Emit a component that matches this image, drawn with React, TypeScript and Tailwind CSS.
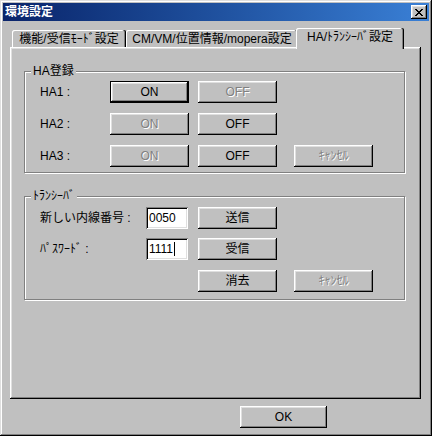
import React from 'react';

const FONT = "font-['Liberation_Sans','Noto_Sans_CJK_JP',sans-serif]";
const RAISED =
  'shadow-[inset_-1px_-1px_0_#000,inset_1px_1px_0_#fff,inset_-2px_-2px_0_#808080,inset_2px_2px_0_#dfdfdf]';
const SUNKEN =
  'shadow-[inset_1px_1px_0_#808080,inset_-1px_-1px_0_#fff,inset_2px_2px_0_#000,inset_-2px_-2px_0_#dfdfdf]';

type BtnProps = {
  children: React.ReactNode;
  disabled?: boolean;
  isDefault?: boolean;
  className?: string;
};

function Btn({ children, disabled, isDefault, className = '' }: BtnProps) {
  return (
    <button
      type="button"
      className={`flex items-center justify-center shrink-0 h-[22px] w-[79px] bg-[#c0c0c0] text-[12px] leading-none ${RAISED} ${
        isDefault ? 'border border-black' : ''
      } ${disabled ? 'text-[#808080] [text-shadow:1px_1px_0_#fff]' : 'text-black'} ${className}`}
    >
      {children}
    </button>
  );
}

function CloseBtn() {
  // classic 8x7 pixel cross
  const px: [number, number][] = [
    [0, 0], [1, 0], [6, 0], [7, 0],
    [1, 1], [2, 1], [5, 1], [6, 1],
    [2, 2], [3, 2], [4, 2], [5, 2],
    [3, 3], [4, 3],
    [2, 4], [3, 4], [4, 4], [5, 4],
    [1, 5], [2, 5], [5, 5], [6, 5],
    [0, 6], [1, 6], [6, 6], [7, 6],
  ];
  return (
    <div className={`w-[16px] h-[14px] bg-[#c0c0c0] flex items-center justify-center ${RAISED}`}>
      <svg width="8" height="7" viewBox="0 0 8 7" shapeRendering="crispEdges">
        {px.map(([x, y]) => (
          <rect key={`${x}-${y}`} x={x} y={y} width="1" height="1" fill="#000" />
        ))}
      </svg>
    </div>
  );
}

function Group({ label, className = '', children }: { label: string; className?: string; children: React.ReactNode }) {
  return (
    <div
      className={`relative w-[381px] border border-[#808080] shadow-[inset_1px_1px_0_#fff,1px_1px_0_#fff] pl-[15px] flex flex-col ${className}`}
    >
      <span className="absolute left-[6px] top-[-8px] px-[2px] bg-[#c0c0c0] text-[12px] leading-[14px] text-black">
        {label}
      </span>
      {children}
    </div>
  );
}

export default function App() {
  return (
    <div
      className={`w-[432px] h-[436px] bg-[#c0c0c0] p-[3px] flex flex-col shadow-[inset_-1px_-1px_0_#000,inset_1px_1px_0_#dfdfdf,inset_-2px_-2px_0_#808080,inset_2px_2px_0_#fff] ${FONT}`}
    >
      {/* Title bar */}
      <div className="h-[18px] flex items-center justify-between pl-[2px] pr-[2px] bg-linear-to-r from-[#0a246a] to-[#3a80d6]">
        <span className="text-white font-bold text-[12px] leading-none">環境設定</span>
        <CloseBtn />
      </div>

      <div className="pl-[7px] pt-[7px] flex flex-col">
        {/* Tabs */}
        <div className="flex items-end h-[19px] pl-[2px] text-[12px] leading-none text-black">
          <div className="w-[114px] h-[17px] flex items-center justify-center rounded-t-[2px] shadow-[inset_-1px_0_0_#000,inset_-2px_0_0_#808080,inset_1px_1px_0_#fff]">
            機能/受信ﾓｰﾄﾞ設定
          </div>
          <div className="w-[172px] h-[17px] flex items-center justify-center rounded-t-[2px] shadow-[inset_-1px_0_0_#000,inset_-2px_0_0_#808080,inset_1px_1px_0_#fff]">
            CM/VM/位置情報/mopera設定
          </div>
          <div className="relative z-10 ml-[-2px] mb-[-2px] w-[108px] h-[21px] pb-[4px] flex items-center justify-center bg-[#c0c0c0] rounded-t-[2px] shadow-[inset_-1px_0_0_#000,inset_-2px_0_0_#808080,inset_1px_1px_0_#fff]">
            HA/ﾄﾗﾝｼｰﾊﾞ設定
          </div>
        </div>

        {/* Tab panel */}
        <div className={`w-[411px] h-[352px] bg-[#c0c0c0] pl-[14px] pt-[24px] flex flex-col ${RAISED}`}>
          <Group label="HA登録" className="h-[102px] pt-[9px] gap-[10px]">
            <div className="flex items-center h-[22px]">
              <span className="w-[70px] text-[12px] leading-none">HA1 :</span>
              <Btn isDefault>ON</Btn>
              <Btn disabled className="ml-[9px]">OFF</Btn>
            </div>
            <div className="flex items-center h-[22px]">
              <span className="w-[70px] text-[12px] leading-none">HA2 :</span>
              <Btn disabled>ON</Btn>
              <Btn className="ml-[9px]">OFF</Btn>
            </div>
            <div className="flex items-center h-[22px]">
              <span className="w-[70px] text-[12px] leading-none">HA3 :</span>
              <Btn disabled>ON</Btn>
              <Btn className="ml-[9px]">OFF</Btn>
              <Btn disabled className="ml-[17px]">ｷｬﾝｾﾙ</Btn>
            </div>
          </Group>

          <Group label="ﾄﾗﾝｼｰﾊﾞ" className="mt-[23px] h-[104px] pt-[10px]">
            <div className="flex items-center h-[22px]">
              <span className="w-[106px] text-[12px] leading-none">新しい内線番号 :</span>
              <div className={`w-[42px] h-[22px] bg-white pl-[3px] flex items-center text-[12px] leading-none ${SUNKEN}`}>
                0050
              </div>
              <Btn className="ml-[10px]">送信</Btn>
            </div>
            <div className="flex items-center h-[22px] mt-[9px]">
              <span className="w-[106px] text-[12px] leading-none">ﾊﾟｽﾜｰﾄﾞ :</span>
              <div className={`w-[42px] h-[22px] bg-white pl-[3px] flex items-center text-[12px] leading-none ${SUNKEN}`}>
                1111
                <span className="inline-block w-px h-[14px] bg-black ml-[1px]" />
              </div>
              <Btn className="ml-[10px]">受信</Btn>
            </div>
            <div className="flex items-center h-[22px] mt-[10px]">
              <Btn className="ml-[158px]">消去</Btn>
              <Btn disabled className="ml-[17px]">ｷｬﾝｾﾙ</Btn>
            </div>
          </Group>
        </div>

        <Btn className="ml-[230px] mt-[7px] w-[87px] h-[21px]">OK</Btn>
      </div>
    </div>
  );
}
